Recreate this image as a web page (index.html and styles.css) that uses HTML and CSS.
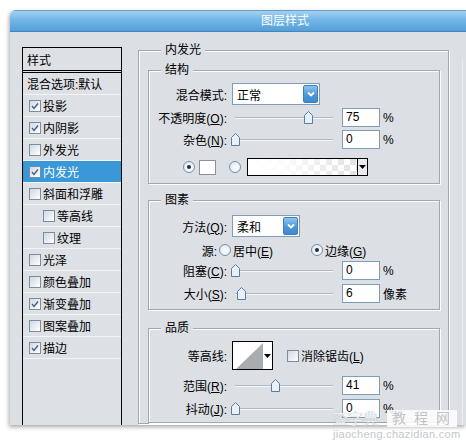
FILE: index.html
```html
<!DOCTYPE html>
<html lang="zh">
<head>
<meta charset="utf-8">
<title>图层样式</title>
<link rel="stylesheet" href="styles.css">
</head>
<body>
<div class="win">
  <div class="titlebar"><span class="title-text">图层样式</span></div>
  <div class="winbody">
    <ul class="stylelist">
      <li class="head">样式</li>
      <li class="blend">混合选项:默认</li>
      <li><span class="cb"><svg viewBox="0 0 10 10"><path d="M2 5 L4 7.5 L8 2.5"/></svg></span>投影</li>
      <li><span class="cb"><svg viewBox="0 0 10 10"><path d="M2 5 L4 7.5 L8 2.5"/></svg></span>内阴影</li>
      <li><span class="cb"></span>外发光</li>
      <li class="sel"><span class="cb"><svg viewBox="0 0 10 10"><path d="M2 5 L4 7.5 L8 2.5"/></svg></span>内发光</li>
      <li><span class="cb"></span>斜面和浮雕</li>
      <li class="sub"><span class="cb"></span>等高线</li>
      <li class="sub"><span class="cb"></span>纹理</li>
      <li><span class="cb"></span>光泽</li>
      <li><span class="cb"></span>颜色叠加</li>
      <li><span class="cb"><svg viewBox="0 0 10 10"><path d="M2 5 L4 7.5 L8 2.5"/></svg></span>渐变叠加</li>
      <li><span class="cb"></span>图案叠加</li>
      <li><span class="cb"><svg viewBox="0 0 10 10"><path d="M2 5 L4 7.5 L8 2.5"/></svg></span>描边</li>
    </ul>

    <section class="grp outer">
      <div class="grp-title">内发光</div>

      <section class="grp inner g-struct">
        <div class="grp-title">结构</div>
        <div class="row r1">
          <span class="lbl">混合模式:</span>
          <div class="select w-mode"><span class="val">正常</span><span class="drop"><svg viewBox="0 0 10 10"><path d="M2 3.5 L5 6.5 L8 3.5"/></svg></span></div>
        </div>
        <div class="row r2">
          <span class="lbl">不透明度(<u>O</u>):</span>
          <div class="slider"><span class="track"></span><span class="thumb" style="left:73px"><svg viewBox="0 0 9 13"><path d="M0.5 4.5 L4.5 0.5 L8.5 4.5 L8.5 12.5 L0.5 12.5 Z"/></svg></span></div>
          <span class="num">75</span><span class="unit">%</span>
        </div>
        <div class="row r3">
          <span class="lbl">杂色(<u>N</u>):</span>
          <div class="slider"><span class="track"></span><span class="thumb" style="left:0px"><svg viewBox="0 0 9 13"><path d="M0.5 4.5 L4.5 0.5 L8.5 4.5 L8.5 12.5 L0.5 12.5 Z"/></svg></span></div>
          <span class="num">0</span><span class="unit">%</span>
        </div>
        <div class="row r4">
          <span class="rd on"></span>
          <span class="swatch"></span>
          <span class="rd rd2"></span>
          <span class="gradbox"><span class="gradfill"></span><span class="gradarrow"><svg viewBox="0 0 7 4"><path d="M0 0 H7 L3.5 4 Z"/></svg></span></span>
        </div>
      </section>

      <section class="grp inner g-elem">
        <div class="grp-title">图素</div>
        <div class="row r5">
          <span class="lbl">方法(<u>Q</u>):</span>
          <div class="select w-tech"><span class="val">柔和</span><span class="drop"><svg viewBox="0 0 10 10"><path d="M2 3.5 L5 6.5 L8 3.5"/></svg></span></div>
        </div>
        <div class="row r6">
          <span class="lbl lbl-src">源:</span>
          <span class="rd"></span><span class="rtxt">居中(<u>E</u>)</span>
          <span class="rd on rd3"></span><span class="rtxt">边缘(<u>G</u>)</span>
        </div>
        <div class="row r7">
          <span class="lbl">阻塞(<u>C</u>):</span>
          <div class="slider"><span class="track"></span><span class="thumb" style="left:0px"><svg viewBox="0 0 9 13"><path d="M0.5 4.5 L4.5 0.5 L8.5 4.5 L8.5 12.5 L0.5 12.5 Z"/></svg></span></div>
          <span class="num">0</span><span class="unit">%</span>
        </div>
        <div class="row r8">
          <span class="lbl">大小(<u>S</u>):</span>
          <div class="slider"><span class="track"></span><span class="thumb" style="left:6px"><svg viewBox="0 0 9 13"><path d="M0.5 4.5 L4.5 0.5 L8.5 4.5 L8.5 12.5 L0.5 12.5 Z"/></svg></span></div>
          <span class="num">6</span><span class="unit">像素</span>
        </div>
      </section>

      <section class="grp inner g-qual">
        <div class="grp-title">品质</div>
        <div class="row r9">
          <span class="lbl">等高线:</span>
          <span class="contour"><svg class="curve" viewBox="0 0 30 27"><polygon points="3,27 30,1 30,27"/></svg><span class="carrow"><svg viewBox="0 0 7 4"><path d="M0 0 H7 L3.5 4 Z"/></svg></span></span>
          <span class="cb cb-aa"></span><span class="rtxt">消除锯齿(<u>L</u>)</span>
        </div>
        <div class="row r10">
          <span class="lbl">范围(<u>R</u>):</span>
          <div class="slider"><span class="track"></span><span class="thumb" style="left:40px"><svg viewBox="0 0 9 13"><path d="M0.5 4.5 L4.5 0.5 L8.5 4.5 L8.5 12.5 L0.5 12.5 Z"/></svg></span></div>
          <span class="num">41</span><span class="unit">%</span>
        </div>
        <div class="row r11">
          <span class="lbl">抖动(<u>J</u>):</span>
          <div class="slider"><span class="track"></span><span class="thumb" style="left:0px"><svg viewBox="0 0 9 13"><path d="M0.5 4.5 L4.5 0.5 L8.5 4.5 L8.5 12.5 L0.5 12.5 Z"/></svg></span></div>
          <span class="num">0</span><span class="unit">%</span>
        </div>
      </section>
    </section>
    <div class="btncol"></div>
  </div>
</div>

<div class="watermark">
  <div class="wm-top"><span class="wm-a">查字典</span><span class="wm-b">教 程 网</span></div>
  <div class="wm-url">jiaocheng.chazidian.com</div>
</div>
</body>
</html>
```
FILE: styles.css
```css
* { box-sizing: border-box; }
html, body { margin: 0; padding: 0; }
body {
  width: 466px;
  height: 440px;
  overflow: hidden;
  position: relative;
  background: #ffffff;
  font-family: "Liberation Sans", "Noto Sans CJK SC", sans-serif;
  font-size: 12px;
  color: #000;
}
u { text-decoration: underline; text-underline-offset: 1px; }

.win {
  margin: 10px 0 0 10px;
  width: 456px;
  height: 415px;
  background: #dcdfe4;
  border-radius: 6px 0 0 0;
  box-shadow: -1px 2px 4px rgba(0, 0, 0, 0.35);
  overflow: hidden;
  display: flex;
  flex-direction: column;
}
.titlebar {
  flex: none;
  height: 22px;
  background: linear-gradient(#a2d0f0, #72b6e6 45%, #549fd9);
  border-top: 1px solid #6a9cc4;
  border-bottom: 1px solid #4586bd;
  color: #fff;
  line-height: 20px;
  font-size: 12px;
  padding-left: 251px;
}
.winbody {
  flex: 1;
  min-height: 0;
  display: flex;
  padding: 15px 0 0 12px;
}

/* style list */
.stylelist {
  list-style: none;
  margin: 0;
  padding: 0;
  width: 100px;
  flex: none;
  border: 1px solid #000;
  border-bottom: none;
  background: #dde0e4;
}
.stylelist li {
  height: 22px;
  display: flex;
  align-items: center;
  padding-left: 6px;
  border-bottom: 1px solid #f3f4f6;
  white-space: nowrap;
}
.stylelist li.head {
  height: 25px;
  padding-left: 4px;
  border-bottom: 3px double #000;
}
.stylelist li.blend { padding-left: 4px; }
.stylelist li.sub { padding-left: 20px; }
.stylelist li.sel { background: #3b98d8; color: #fff; }
.stylelist .cb { margin-right: 2px; }

.cb {
  width: 12px;
  height: 12px;
  flex: none;
  border: 1px solid #7a8ca2;
  background: linear-gradient(135deg, #d0d8e2, #ffffff);
  display: inline-flex;
  align-items: center;
  justify-content: center;
}
.cb svg { width: 10px; height: 10px; }
.cb path { fill: none; stroke: #46607e; stroke-width: 1.4; }

/* groups */
.grp {
  border: 1px solid #a2a7ad;
  box-shadow: inset 1px 1px 0 #fbfcfd, 1px 1px 0 #fbfcfd;
  display: flex;
  flex-direction: column;
}
.grp-title {
  align-self: flex-start;
  margin: -8px 0 0 13px;
  padding: 0 4px;
  line-height: 14px;
  height: 14px;
  background: #dcdfe4;
}
.inner .grp-title { margin-left: 12px; }
.outer {
  width: 311px;
  flex: none;
  margin: 3px 0 0 16px;
  padding: 0 8px 0 9px;
  align-self: flex-start;
}
.g-struct { margin-top: 13px; padding-bottom: 7px; }
.g-elem { margin-top: 16px; padding-bottom: 6px; }
.g-qual { margin-top: 18px; padding-bottom: 4px; }

.btncol {
  flex: none;
  width: 1px;
  margin: 12px 0 0 13px;
  background: #eceef1;
}

.row { display: flex; align-items: center; white-space: nowrap; }
.lbl { width: 78px; flex: none; text-align: right; margin-right: 5px; }

.r1 { margin-top: 6px; height: 22px; }
.r2 { margin-top: 3px; height: 19px; }
.r3 { margin-top: 3px; height: 19px; }
.r4 { margin-top: 9px; height: 18px; padding-left: 34px; }
.r5 { margin-top: 8px; height: 22px; }
.r6 { margin-top: 5px; height: 16px; }
.r7 { margin-top: 3px; height: 19px; }
.r8 { margin-top: 4px; height: 19px; }
.r9 { margin-top: 6px; height: 29px; }
.r10 { margin-top: 6px; height: 19px; }
.r11 { margin-top: 4px; height: 19px; }

/* select */
.select {
  height: 22px;
  display: flex;
  align-items: center;
  background: #fff;
  border: 1px solid #7f9db9;
  padding: 0 1px 0 4px;
}
.select .val { flex: 1; }
.w-mode { width: 88px; }
.w-tech { width: 68px; }
.drop {
  width: 15px;
  height: 18px;
  border: 1px solid #3f7fb8;
  border-radius: 2px;
  background: linear-gradient(#8cc4ee, #4a95d6 60%, #3e8acd);
  display: flex;
  align-items: center;
  justify-content: center;
}
.drop svg { width: 10px; height: 10px; }
.drop path { fill: none; stroke: #fff; stroke-width: 1.8; }

/* slider */
.slider {
  position: relative;
  width: 106px;
  height: 19px;
  margin-left: -1px;
  flex: none;
}
.track {
  position: absolute;
  left: 4px;
  right: 4px;
  top: 9px;
  height: 2px;
  border-top: 1px solid #b4b8bd;
  border-bottom: 1px solid #f6f7f8;
}
.thumb {
  position: absolute;
  top: 3px;
  width: 9px;
  height: 13px;
}
.thumb svg { width: 9px; height: 13px; display: block; }
.thumb path { fill: #e8f1fa; stroke: #5b7c9c; stroke-width: 1; }

.num {
  width: 38px;
  height: 19px;
  flex: none;
  margin-left: 5px;
  background: #fff;
  border: 1px solid #7f9db9;
  padding-left: 3px;
  line-height: 17px;
}
.unit { margin-left: 3px; }

/* radios */
.rd {
  width: 12px;
  height: 12px;
  flex: none;
  border-radius: 50%;
  border: 1px solid #7590ad;
  background: radial-gradient(circle at 60% 60%, #ffffff, #dbe2ea);
  display: inline-flex;
  align-items: center;
  justify-content: center;
}
.rd.on::after {
  content: "";
  width: 4px;
  height: 4px;
  border-radius: 50%;
  background: #1f2d3c;
}
.swatch {
  width: 17px;
  height: 15px;
  margin-left: 4px;
  background: #fff;
  border: 1px solid #8c8f93;
}
.rd2 { margin-left: 13px; }
.gradbox {
  width: 121px;
  height: 18px;
  margin-left: 6px;
  border: 1px solid #000;
  display: flex;
}
.gradfill {
  flex: 1;
  background:
    linear-gradient(to right, #fff 0%, rgba(255,255,255,0.9) 30%, rgba(255,255,255,0) 100%),
    conic-gradient(#e2e2e2 25%, #fff 0 50%, #e2e2e2 0 75%, #fff 0) 0 0 / 12px 12px;
}
.gradarrow {
  width: 10px;
  border-left: 1px solid #000;
  background: #e9ebee;
  display: flex;
  align-items: center;
  justify-content: center;
}
.gradarrow svg, .carrow svg { width: 7px; height: 4px; }
.gradarrow path, .carrow path { fill: #000; }

.lbl-src { width: 68px; margin-right: 2px; }
.rtxt { margin-left: 2px; }
.rd3 { margin-left: 38px; }

/* contour */
.contour {
  width: 41px;
  height: 29px;
  border: 1px solid #000;
  background: #fff;
  display: flex;
}
.curve { width: 30px; height: 27px; display: block; }
.curve polygon { fill: #a9adb2; }
.carrow {
  flex: 1;
  display: flex;
  align-items: center;
  justify-content: center;
  background: #fff;
}
.cb-aa { margin-left: 14px; }

/* watermark */
.watermark {
  position: absolute;
  left: 333px;
  top: 410px;
  width: 124px;
  color: #b5bac0;
}
.wm-top { display: flex; align-items: center; height: 17px; }
.wm-a {
  width: 54px;
  font-size: 15px;
  line-height: 17px;
  color: #eceef0;
  text-shadow: 0 0 1px #a4aab0;
}
.wm-b {
  flex: 1;
  background: rgba(255, 255, 255, 0.85);
  font-size: 14px;
  line-height: 17px;
  color: #c0c4c9;
  text-align: center;
  letter-spacing: 2px;
}
.wm-url {
  font-size: 11px;
  line-height: 12px;
  color: #c4c8cd;
  text-align: right;
  margin-top: 1px;
  letter-spacing: 0.3px;
}
```
